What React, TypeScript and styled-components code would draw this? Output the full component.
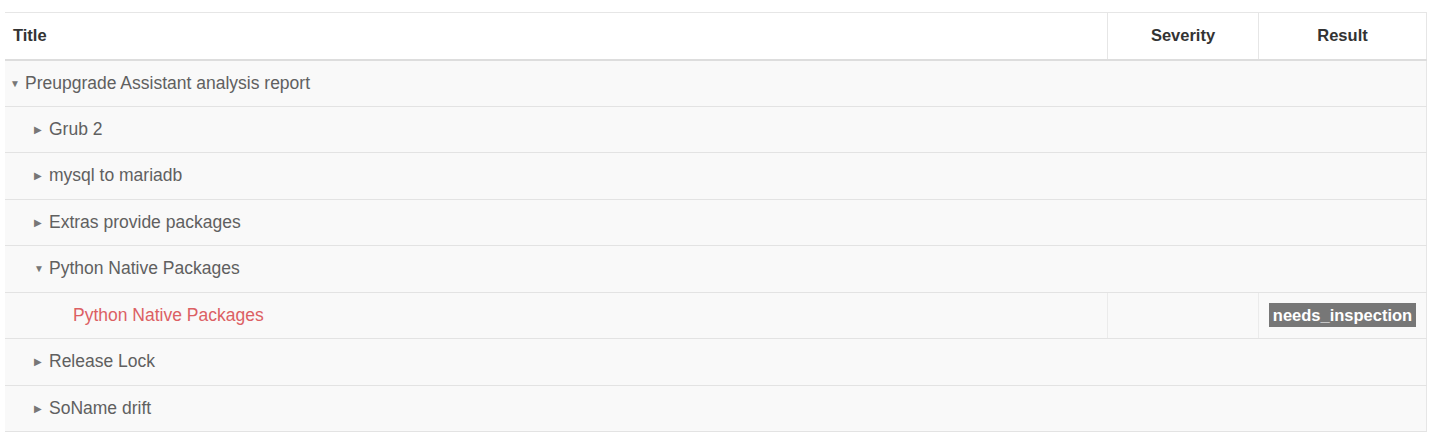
import React from "react";
import styled, { createGlobalStyle } from "styled-components";

const Global = createGlobalStyle`
  html, body { margin: 0; padding: 0; background: #fff; }
  body { font-family: "Liberation Sans", Arial, sans-serif; }
  *, *::before, *::after { box-sizing: border-box; }
`;

const Wrap = styled.div`
  padding: 12px 13px 0 5px;
`;

const Table = styled.table`
  width: 100%;
  border-collapse: collapse;
  table-layout: fixed;
  border-top: 1px solid #e6e6e6;
  border-right: 1px solid #e6e6e6;
`;

const Th = styled.th<{ $align?: string; $w?: number }>`
  height: 47px;
  padding: 0 8px;
  text-align: ${(p) => p.$align || "left"};
  font-size: 16.5px;
  font-weight: bold;
  color: #333;
  border-bottom: 2px solid #ddd;
  border-left: ${(p) => (p.$align === "center" ? "1px solid #e6e6e6" : "none")};
  width: ${(p) => (p.$w ? p.$w + "px" : "auto")};
  background: #fff;
`;

const Tr = styled.tr`
  background: #f9f9f9;
`;

const Td = styled.td<{ $line?: boolean }>`
  height: 46.5px;
  padding: 0;
  border-bottom: 1px solid #e3e3e3;
  border-left: ${(p) => (p.$line ? "1px solid #ebebeb" : "none")};
  font-size: 17.5px;
  color: #606060;
  white-space: nowrap;
`;

const TitleCell = styled.div<{ $level: number }>`
  display: flex;
  align-items: center;
  padding-left: ${(p) => p.$level * 24 + 5}px;
`;

const Caret = styled.span`
  display: inline-block;
  width: 15px;
  font-size: 10px;
  color: #777;
`;

const LeafText = styled.span`
  color: #dc6064;
  padding-left: 15px;
`;

const ResultCell = styled.td`
  height: 46.5px;
  padding: 0 4px;
  border-bottom: 1px solid #e3e3e3;
  border-left: 1px solid #ebebeb;
  text-align: center;
`;

const Badge = styled.span`
  display: inline-block;
  background: #777;
  color: #fff;
  font-size: 16.5px;
  font-weight: bold;
  padding: 3px 4px;
  line-height: 18px;
  white-space: nowrap;
`;

type Row = { title: string; level: number; open?: boolean; leaf?: boolean; result?: string };

const rows: Row[] = [
  { title: "Preupgrade Assistant analysis report", level: 0, open: true },
  { title: "Grub 2", level: 1 },
  { title: "mysql to mariadb", level: 1 },
  { title: "Extras provide packages", level: 1 },
  { title: "Python Native Packages", level: 1, open: true },
  { title: "Python Native Packages", level: 2, leaf: true, result: "needs_inspection" },
  { title: "Release Lock", level: 1 },
  { title: "SoName drift", level: 1 },
];

export default function App() {
  return (
    <>
      <Global />
      <Wrap>
        <Table>
          <thead>
            <tr>
              <Th>Title</Th>
              <Th $align="center" $w={151}>Severity</Th>
              <Th $align="center" $w={168}>Result</Th>
            </tr>
          </thead>
          <tbody>
            {rows.map((r, i) =>
              r.leaf ? (
                <Tr key={i}>
                  <Td>
                    <TitleCell $level={r.level}>
                      <LeafText>{r.title}</LeafText>
                    </TitleCell>
                  </Td>
                  <Td $line />
                  <ResultCell>{r.result && <Badge>{r.result}</Badge>}</ResultCell>
                </Tr>
              ) : (
                <Tr key={i}>
                  <Td colSpan={3}>
                    <TitleCell $level={r.level}>
                      <Caret>{r.open ? "▼" : "▶"}</Caret>
                      {r.title}
                    </TitleCell>
                  </Td>
                </Tr>
              )
            )}
          </tbody>
        </Table>
      </Wrap>
    </>
  );
}
